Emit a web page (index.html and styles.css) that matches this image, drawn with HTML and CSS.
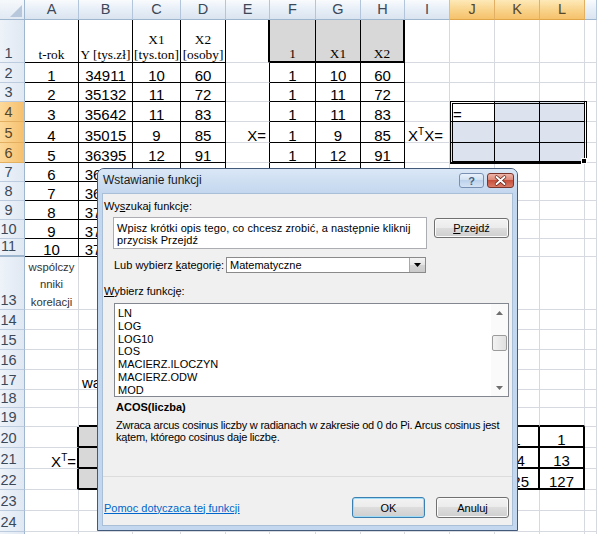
FILE: index.html
```html
<!DOCTYPE html>
<html lang="pl">
<head>
<meta charset="utf-8">
<title>Wstawianie funkcji</title>
<link rel="stylesheet" href="styles.css">
</head>
<body>
<div class="sheet">
  <div class="corner"><svg width="24" height="19" viewBox="0 0 24 19"><polygon points="10,17 22,17 22,5" fill="#b7c8dc"/></svg></div>
  <div class="ch">A</div><div class="ch">B</div><div class="ch">C</div><div class="ch">D</div><div class="ch">E</div><div class="ch">F</div><div class="ch">G</div><div class="ch">H</div><div class="ch">I</div><div class="ch sel">J</div><div class="ch sel">K</div><div class="ch sel">L</div><div class="ch"></div>

  <div class="rh">1</div><div class="k tm">t-rok</div><div class="k tm">Y [tys.zł]</div><div class="k tm">X1<br>[tys.ton]</div><div class="k tm">X2<br>[osoby]</div><div class="KR"></div><div class="g tm kr KB">1</div><div class="g tm kr KB">X1</div><div class="g tm KR KB">X2</div><div></div><div></div><div></div><div></div><div></div>

  <div class="rh">2</div><div class="k">1</div><div class="k">34911</div><div class="k">10</div><div class="k">60</div><div class="kr"></div><div class="k">1</div><div class="k">10</div><div class="k">60</div><div></div><div></div><div></div><div></div><div></div>

  <div class="rh">3</div><div class="k">2</div><div class="k">35132</div><div class="k">11</div><div class="k">72</div><div class="kr"></div><div class="k">1</div><div class="k">11</div><div class="k">72</div><div></div><div></div><div></div><div></div><div></div>

  <div class="rh sel">4</div><div class="k">3</div><div class="k">35642</div><div class="k">11</div><div class="k">83</div><div class="kr"></div><div class="k">1</div><div class="k">11</div><div class="k">83</div><div></div><div class="k l anchor">=<span class="selbox"><span class="handle"></span></span></div><div class="k sl"></div><div class="k sl"></div><div></div>

  <div class="rh sel">5</div><div class="k">4</div><div class="k">35015</div><div class="k">9</div><div class="k">85</div><div class="kr r">X=</div><div class="k">1</div><div class="k">9</div><div class="k">85</div><div class="l"><span>X<span class="sup">T</span>X=</span></div><div class="k sl"></div><div class="k sl"></div><div class="k sl"></div><div></div>

  <div class="rh sel">6</div><div class="k">5</div><div class="k">36395</div><div class="k">12</div><div class="k">91</div><div class="kr"></div><div class="k">1</div><div class="k">12</div><div class="k">91</div><div></div><div class="k sl"></div><div class="k sl"></div><div class="k sl"></div><div></div>

  <div class="rh">7</div><div class="k">6</div><div class="k">36750</div><div class="k"></div><div class="k"></div><div class="kr"></div><div class="k"></div><div class="k"></div><div class="k"></div><div></div><div></div><div></div><div></div><div></div>

  <div class="rh">8</div><div class="k">7</div><div class="k">36980</div><div class="k"></div><div class="k"></div><div class="kr"></div><div class="k"></div><div class="k"></div><div class="k"></div><div></div><div></div><div></div><div></div><div></div>

  <div class="rh">9</div><div class="k">8</div><div class="k">37120</div><div class="k"></div><div class="k"></div><div class="kr"></div><div class="k"></div><div class="k"></div><div class="k"></div><div></div><div></div><div></div><div></div><div></div>

  <div class="rh">10</div><div class="k">9</div><div class="k">37460</div><div class="k"></div><div class="k"></div><div class="kr"></div><div class="k"></div><div class="k"></div><div class="k"></div><div></div><div></div><div></div><div></div><div></div>

  <div class="rh h12">11</div><div class="k">10</div><div class="k">37810</div><div class="k"></div><div class="k"></div><div class="kr"></div><div class="k"></div><div class="k"></div><div class="k"></div><div></div><div></div><div></div><div></div><div></div>

  <div class="rh">13</div><div class="kor">wspólczy<br>nniki<br>korelacji</div><div></div><div></div><div></div><div></div><div></div><div></div><div></div><div></div><div></div><div></div><div></div><div></div>

  <div class="rh">14</div><div></div><div></div><div></div><div></div><div></div><div></div><div></div><div></div><div></div><div></div><div></div><div></div><div></div>

  <div class="rh">15</div><div></div><div></div><div></div><div></div><div></div><div></div><div></div><div></div><div></div><div></div><div></div><div></div><div></div>

  <div class="rh">16</div><div></div><div></div><div></div><div></div><div></div><div></div><div></div><div></div><div></div><div></div><div></div><div></div><div></div>

  <div class="rh">17</div><div></div><div class="l">wartości</div><div></div><div></div><div></div><div></div><div></div><div></div><div></div><div></div><div></div><div></div><div></div>

  <div class="rh">18</div><div></div><div></div><div></div><div></div><div></div><div></div><div></div><div></div><div></div><div></div><div></div><div></div><div></div>

  <div class="rh">19</div><div></div><div class="KB"></div><div class="KB"></div><div class="KB"></div><div class="KB"></div><div class="KB"></div><div class="KB"></div><div class="KB"></div><div class="KB"></div><div class="KB"></div><div class="KB"></div><div class="KB"></div><div></div>

  <div class="rh">20</div><div class="KR"></div><div class="K g"></div><div class="K"></div><div class="K"></div><div class="K"></div><div class="K"></div><div class="K"></div><div class="K"></div><div class="K"></div><div class="K"></div><div class="K">1</div><div class="K">1</div><div></div>

  <div class="rh">21</div><div class="KR r"><span>X<span class="sup">T</span>=</span></div><div class="K g"></div><div class="K"></div><div class="K"></div><div class="K"></div><div class="K"></div><div class="K"></div><div class="K"></div><div class="K"></div><div class="K"></div><div class="K">14</div><div class="K">13</div><div></div>

  <div class="rh">22</div><div class="KR"></div><div class="K g"></div><div class="K"></div><div class="K"></div><div class="K"></div><div class="K"></div><div class="K"></div><div class="K"></div><div class="K"></div><div class="K"></div><div class="K">125</div><div class="K">127</div><div></div>

  <div class="rh">23</div><div></div><div></div><div></div><div></div><div></div><div></div><div></div><div></div><div></div><div></div><div></div><div></div><div></div>

  <div class="rh">24</div><div></div><div></div><div></div><div></div><div></div><div></div><div></div><div></div><div></div><div></div><div></div><div></div><div></div>

  <div class="rh"></div><div></div><div></div><div></div><div></div><div></div><div></div><div></div><div></div><div></div><div></div><div></div><div></div><div></div>
</div>

<div class="dlg">
  <div class="tb">
    <span class="ttl">Wstawianie funkcji</span>
    <span class="hbtn">?</span>
    <span class="xbtn"><svg width="25" height="13" viewBox="0 0 25 13"><path d="M8.5 3 L16.5 10 M16.5 3 L8.5 10" stroke="#5a1d14" stroke-width="3.4" stroke-linecap="round"/><path d="M8.5 3 L16.5 10 M16.5 3 L8.5 10" stroke="#fff" stroke-width="2" stroke-linecap="round"/></svg></span>
  </div>
  <div class="client">
    <div class="lbl1">Wy<u>s</u>zukaj funkcję:</div>
    <div class="srow">
      <div class="search">Wpisz krótki opis tego, co chcesz zrobić, a następnie kliknij<br>przycisk Przejdź</div>
      <div class="btn go"><span><u>P</u>rzejdź</span></div>
    </div>
    <div class="crow">
      <span class="clbl">Lub wybierz <u>k</u>ategorię:</span>
      <div class="combo"><span class="cval">Matematyczne</span><span class="carr"><svg width="7" height="4" viewBox="0 0 7 4"><polygon points="0,0 7,0 3.5,4" fill="#000"/></svg></span></div>
    </div>
    <div class="lbl2"><u>W</u>ybierz funkcję:</div>
    <div class="list">
      <div class="items">LN<br>LOG<br>LOG10<br>LOS<br>MACIERZ.ILOCZYN<br>MACIERZ.ODW<br>MOD</div>
      <div class="sb">
        <span class="arw"><svg width="7" height="4" viewBox="0 0 7 4"><polygon points="0,4 7,4 3.5,0" fill="#6e6e6e"/></svg></span>
        <span class="trk"><span class="thumb"></span></span>
        <span class="arw"><svg width="7" height="4" viewBox="0 0 7 4"><polygon points="0,0 7,0 3.5,4" fill="#6e6e6e"/></svg></span>
      </div>
    </div>
    <div class="fn">ACOS(liczba)</div>
    <div class="desc">Zwraca arcus cosinus liczby w radianach w zakresie od 0 do Pi. Arcus cosinus jest<br>kątem, którego cosinus daje liczbę.</div>
    <div class="sep"></div>
    <div class="foot">
      <a class="link" href="#">Pomoc dotyczaca tej funkcji</a>
      <div class="btn ok"><span>OK</span></div>
      <div class="btn"><span>Anuluj</span></div>
    </div>
  </div>
</div>
</body>
</html>
```

FILE: styles.css
```css
* { box-sizing: border-box; }
html, body { margin: 0; padding: 0; }
body {
  width: 597px; height: 534px; overflow: hidden; position: relative;
  background: #fff; color: #000;
  font-family: "Liberation Sans", Arial, sans-serif;
}

/* ---------- spreadsheet ---------- */
.sheet {
  display: grid;
  grid-template-columns: 25px 54px 54px 48px 45px 44px 46px 45px 44px 45px 45px 45px 45px 12px;
  grid-template-rows: 20px 43px 20px 19px 20px 21px 20px 19px 19px 19px 19px 18px 53px 20px 20px 20px 20px 18px 19px 21px 21px 21px 21px 21px 21px;
}
.sheet > * {
  display: flex; align-items: flex-end; justify-content: center;
  border-right: 1px solid #d6d9df; border-bottom: 1px solid #d6d9df;
  font-size: 15px; line-height: 12px; white-space: nowrap; min-width: 0;
}
.corner {
  background: linear-gradient(#f6f9fc, #e1e9f3);
  border-right: 1px solid #9eb6ce; border-bottom: 1px solid #9eb6ce;
  align-items: flex-start; justify-content: flex-start;
}
.ch {
  background: linear-gradient(#f9fbfd, #e7eef7 50%, #dae4f0);
  border-right: 1px solid #b3c5da; border-bottom: 1px solid #9eb6ce;
  align-items: center; line-height: 19px; font-size: 14.5px; color: #3b4858;
}
.ch.sel {
  background: linear-gradient(#fde9b8, #f9d48d 50%, #f5c26b);
  border-right-color: #e2b064; border-bottom-color: #e0a548; color: #56462a;
}
.rh {
  background: linear-gradient(90deg, #eef3f9, #e0e8f3);
  border-right: 1px solid #9eb6ce; border-bottom: 1px solid #bccbdd;
  padding-right: 7px; padding-bottom: 1px; line-height: 16px; font-size: 14.5px; color: #3b4858;
}
.rh.sel {
  background: linear-gradient(90deg, #fcd99a, #f6c06e);
  border-bottom-color: #e3b062; color: #56462a;
}
.rh.h12 { border-bottom: 2px solid #9eb6ce; }

.k { border-right-color: #000; border-bottom-color: #000; }
.kr { border-right-color: #000; }
.kb { border-bottom-color: #000; }
.K { border-right: 2px solid #000; border-bottom: 2px solid #000; }
.KR { border-right: 2px solid #000; }
.KB { border-bottom: 2px solid #000; }
.g { background: #d8d8d8; }
.sl { background: #dde3ee; }
.tm {
  font-family: "Liberation Serif", "Times New Roman", serif;
  font-size: 13.33px; line-height: 15px; text-align: center; white-space: normal;
}
.r { justify-content: flex-end; padding-right: 3px; }
.l { justify-content: flex-start; padding-left: 3px; }
.r.KR { padding-right: 1px; }
.kor {
  align-items: flex-start; padding-top: 2px;
  font-size: 11.3px; line-height: 17.3px; text-align: center;
  white-space: normal; color: #333;
}
.sup { font-size: 10px; line-height: 1; vertical-align: 6px; }

.anchor { position: relative; }
.selbox {
  position: absolute; left: 0; top: -1px; width: 137px; height: 63px;
  border: 3px double #000; z-index: 2;
}
.handle {
  position: absolute; right: -3px; bottom: -3px; width: 6px; height: 6px;
  background: #000; border: 1px solid #fff;
}

/* ---------- dialog ---------- */
.dlg {
  position: absolute; left: 97px; top: 168px; width: 421px; height: 363px; z-index: 5;
  border: 1px solid #43597a; border-radius: 7px 7px 0 0;
  background: #c3d7ee; padding: 0 4px 4px;
  display: flex; flex-direction: column;
  font-size: 11px; color: #000;
}
.tb {
  height: 24px; margin: 0 -4px; padding: 0 3px 0 5px;
  display: flex; align-items: center;
  background: linear-gradient(#dae7f6, #c3d7ee);
  border-radius: 6px 6px 0 0;
}
.ttl { flex: 1; font-size: 12px; color: #1a1a1a; margin-top: -2px; }
.hbtn, .xbtn {
  align-self: flex-start; margin-top: 4px; height: 15px;
  display: flex; align-items: center; justify-content: center;
  border-radius: 3px;
}
.hbtn {
  width: 25px; border: 1px solid #7891b2;
  background: linear-gradient(#e9f1fb, #cfdff1 50%, #bcd2ec 50%, #d3e3f4);
  color: #4a5f7c; font-weight: bold; font-size: 11px;
}
.xbtn {
  width: 27px; margin-left: 3px; border: 1px solid #7a352c;
  background: linear-gradient(#eeb4a8, #da8573 50%, #c54f3b 50%, #d97a66);
}
.client {
  flex: 1; background: #f0f0f0; border: 1px solid #a9bed7;
  padding: 0 3px 7px 1px;
  display: flex; flex-direction: column;
}
.lbl1 { margin-top: 6px; line-height: 13px; }
.srow { display: flex; margin-top: 4px; }
.search {
  margin-left: 9px; width: 314px; height: 32px;
  border: 1px solid #abadb3; background: #fff;
  padding: 4px 3px; line-height: 12.4px; white-space: nowrap; letter-spacing: 0.1px;
}
.btn {
  display: flex; align-items: center; justify-content: center;
  height: 21px; width: 73px; border: 1px solid #707070; border-radius: 3px;
  background: linear-gradient(#f3f3f3, #ebebeb 50%, #dddddd 50%, #cfcfcf);
  box-shadow: inset 0 0 0 1px #fbfbfb;
}
.go { margin-left: 7px; margin-top: 1px; width: 75px; height: 20px; }
.crow { display: flex; align-items: center; margin-top: 8px; height: 16px; }
.clbl { margin-left: 10px; width: 112px; }
.combo {
  display: flex; width: 200px; height: 16px;
  border: 1px solid #8a8a8a; background: #fff;
}
.cval { flex: 1; padding-left: 3px; line-height: 14px; }
.carr {
  width: 16px; display: flex; align-items: center; justify-content: center;
  border-left: 1px solid #a8a8a8;
  background: linear-gradient(#f4f4f4, #e4e4e4 50%, #d4d4d4 50%, #cacaca);
}
.lbl2 { margin-top: 12px; line-height: 13px; }
.list {
  display: flex; margin-top: 5px; margin-left: 10px; width: 395px; height: 94px;
  border: 1px solid #828790; background: #fff;
}
.items { flex: 1; padding: 3px 0 0 3px; line-height: 12.77px; overflow: hidden; }
.sb { width: 17px; display: flex; flex-direction: column; background: #fafafa; }
.arw { height: 17px; display: flex; align-items: center; justify-content: center; }
.trk { flex: 1; display: flex; flex-direction: column; align-items: center; }
.thumb {
  margin-top: 14px; width: 15px; height: 16px;
  border: 1px solid #9b9b9b; border-radius: 2px;
  background: linear-gradient(90deg, #f2f2f2, #e0e0e0);
}
.fn { margin-top: 4px; margin-left: 12px; font-weight: bold; line-height: 13px; }
.desc { margin-top: 5px; margin-left: 12px; line-height: 12.3px; white-space: nowrap; letter-spacing: -0.22px; }
.sep { margin: auto -3px 0 -1px; height: 1px; background: #dcdcdc; }
.foot { display: flex; align-items: center; height: 21px; margin-top: 20px; }
.link { flex: 1; color: #0066cc; text-decoration: underline; }
.ok { margin-right: 11px; border-color: #3c7fb1; box-shadow: inset 0 0 0 1px #9fdcf8; }
```
